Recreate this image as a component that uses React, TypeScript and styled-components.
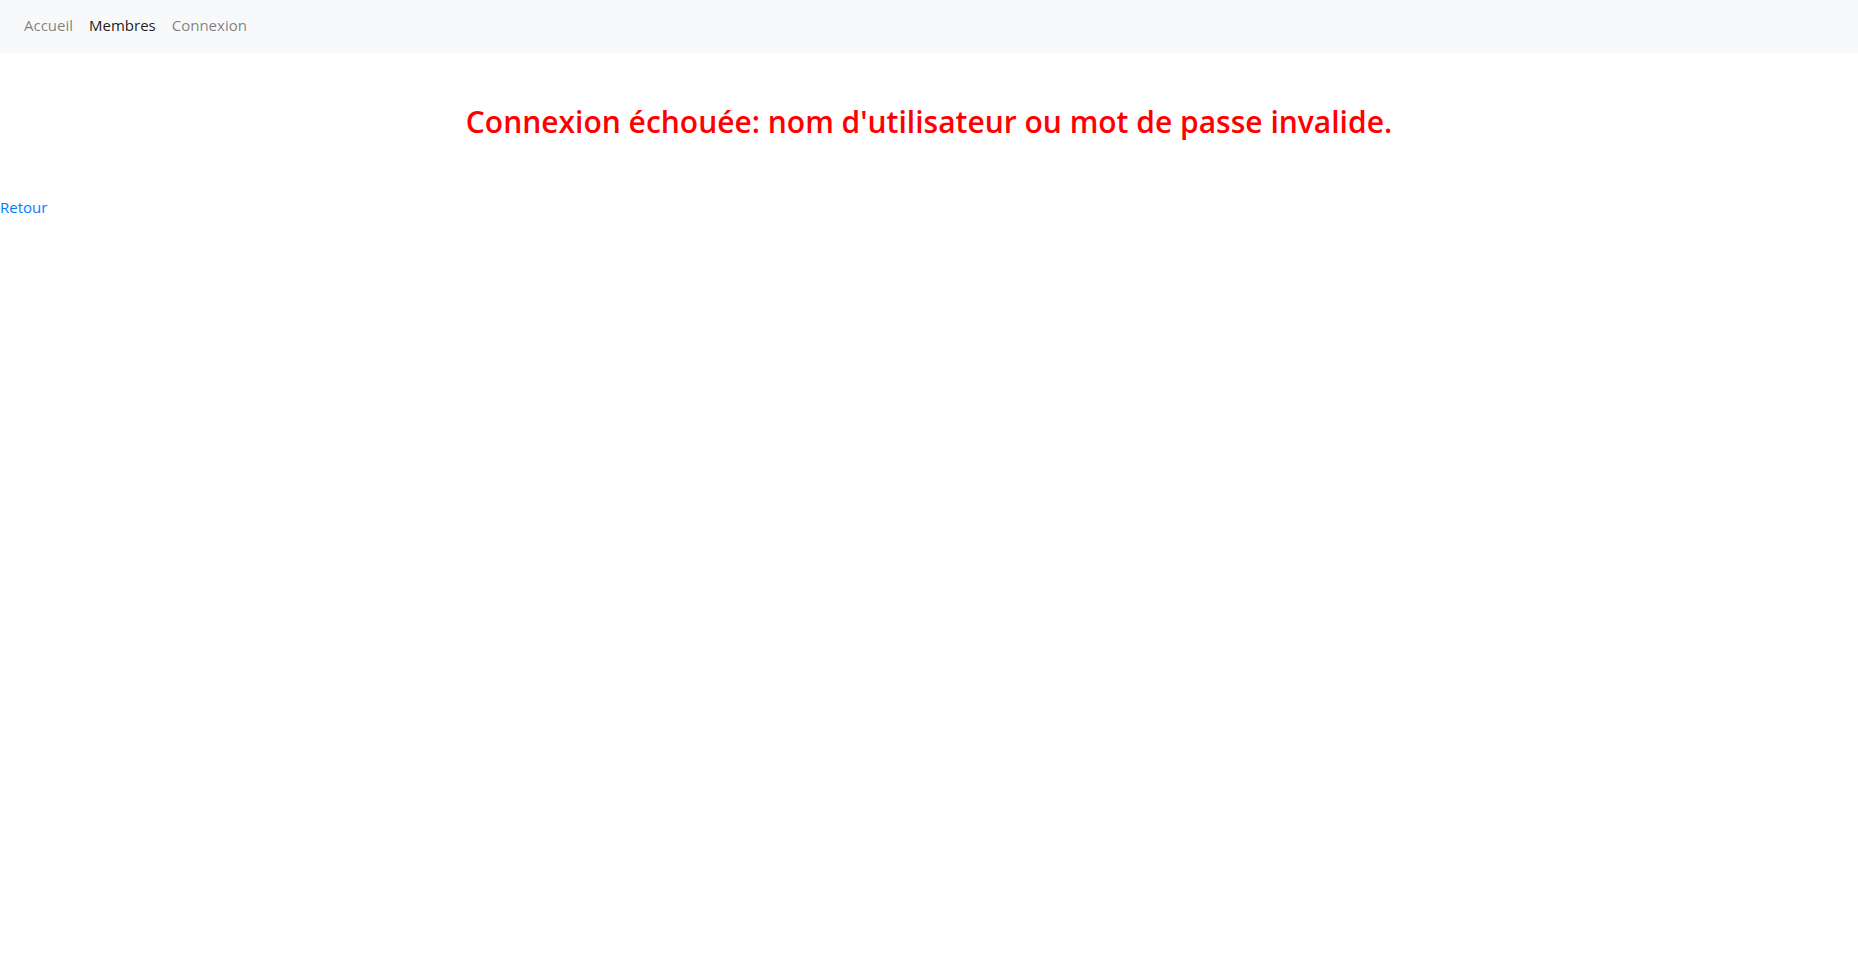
import React from "react";
import styled, { createGlobalStyle } from "styled-components";

const Global = createGlobalStyle`
  html, body { margin: 0; padding: 0; background: #fff; }
  body {
    font-family: "Open Sans", "Noto Sans", "Liberation Sans", sans-serif;
    font-size: 16px;
    line-height: 1.5;
    color: #212529;
  }
`;

const Navbar = styled.nav`
  display: flex;
  align-items: center;
  height: 53px;
  padding: 0 16px 2px;
  background: #f8f9fa;
  box-sizing: border-box;
`;

const NavList = styled.ul`
  display: flex;
  list-style: none;
  margin: 0;
  padding: 0;
`;

const NavLink = styled.a<{ $active?: boolean }>`
  display: block;
  padding: 8px;
  font-size: 15px;
  text-decoration: none;
  color: ${(p) => (p.$active ? "rgba(0,0,0,0.9)" : "rgba(0,0,0,0.5)")};
  cursor: pointer;
`;

const Main = styled.main`
  display: flex;
  flex-direction: column;
`;

const ErrorTitle = styled.h2`
  margin: 51px 0 0;
  text-align: center;
  color: #ff0000;
  font-size: 30px;
  font-weight: 600;
  line-height: 1.2;
`;

const BackLink = styled.a`
  margin-top: 56px;
  align-self: flex-start;
  color: #007bff;
  font-size: 15px;
  text-decoration: none;
`;

export default function App() {
  return (
    <>
      <Global />
      <Navbar>
        <NavList>
          <li><NavLink>Accueil</NavLink></li>
          <li><NavLink $active>Membres</NavLink></li>
          <li><NavLink>Connexion</NavLink></li>
        </NavList>
      </Navbar>
      <Main>
        <ErrorTitle>Connexion échouée: nom d'utilisateur ou mot de passe invalide.</ErrorTitle>
        <BackLink href="#">Retour</BackLink>
      </Main>
    </>
  );
}
